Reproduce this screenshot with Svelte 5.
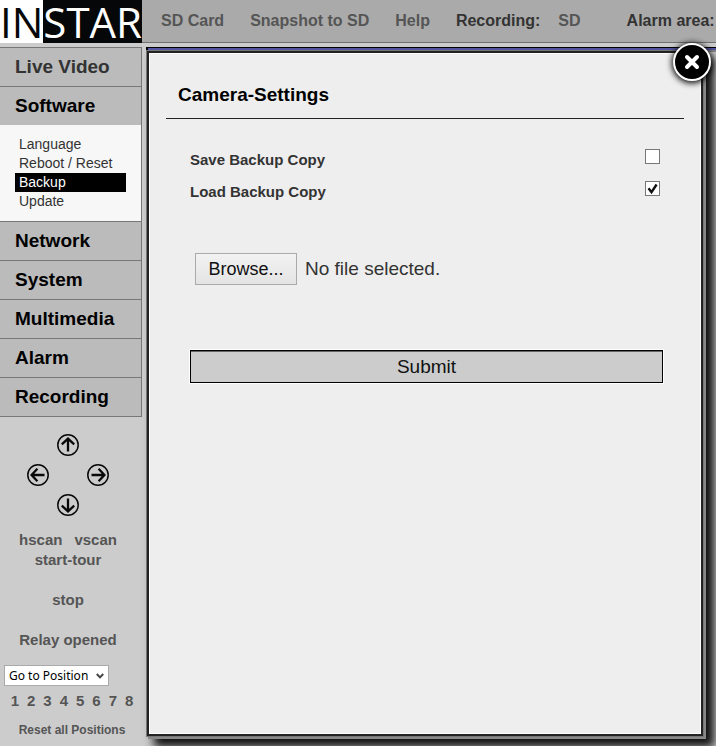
<script>
  const topLinks = ['SD Card', 'Snapshot to SD', 'Help'];
  const sections = [
    { title: 'Live Video', muted: true, items: [] },
    { title: 'Software', items: ['Language', 'Reboot / Reset', 'Backup', 'Update'] },
    { title: 'Network', items: [] },
    { title: 'System', items: [] },
    { title: 'Multimedia', items: [] },
    { title: 'Alarm', items: [] },
    { title: 'Recording', items: [] }
  ];
  const directions = [
    { name: 'up', angle: 0 },
    { name: 'left', angle: 270 },
    { name: 'right', angle: 90 },
    { name: 'down', angle: 180 }
  ];
  const positions = [1, 2, 3, 4, 5, 6, 7, 8];

  let current = $state('Backup');
  let save = $state(false);
  let load = $state(true);
  let open = $state(true);
  let fileName = $state('');
  let picker;
</script>

<div class="page">
  <header>
    <a class="logo" href="#home" aria-label="INSTAR"><span class="in">IN</span><span class="star">STAR</span></a>
    <nav class="top">
      {#each topLinks as link}
        <a href="#top">{link}</a>
      {/each}
      <span class="status"><b>Recording:</b><a href="#sd">SD</a></span>
      <b>Alarm area:</b>
    </nav>
  </header>

  <div class="body">
    <aside>
      <nav class="menu">
        {#each sections as section}
          <a class="title" class:muted={section.muted} href="#section">{section.title}</a>
          {#if section.items.length}
            <ul>
              {#each section.items as item}
                <li><a href="#item" class:current={item === current} onclick={() => (current = item)}>{item}</a></li>
              {/each}
            </ul>
          {/if}
        {/each}
      </nav>

      <div class="controls">
        <div class="pad">
          {#each directions as d}
            <button type="button" class={d.name} aria-label={d.name}>
              <svg width="24" height="24" viewBox="0 0 24 24" fill="none" stroke="#080808">
                <circle cx="12" cy="12" r="10.2" stroke-width="1.5" />
                <path d="M12 18.5V6.2M5.8 11.4L12 5.6l6.2 5.8" stroke-width="2.3" transform="rotate({d.angle} 12 12)" />
              </svg>
            </button>
          {/each}
        </div>
        <div class="scan"><a href="#hscan">hscan</a><a href="#vscan">vscan</a></div>
        <a href="#tour">start-tour</a>
        <a class="apart" href="#stop">stop</a>
        <a class="apart" href="#relay">Relay opened</a>
        <div class="goto">
          <select aria-label="Go to Position">
            <option>Go to Position</option>
            {#each positions as p}<option>{p}</option>{/each}
          </select>
          <svg width="8" height="6" viewBox="0 0 8 6" fill="none" stroke="#444" stroke-width="2"><path d="M.8 1L4 4.4 7.2 1" /></svg>
        </div>
        <div class="numbers">
          {#each positions as p}<a href="#position">{p}</a>{/each}
        </div>
        <a class="reset" href="#reset">Reset all Positions</a>
      </div>
    </aside>

    <main>
      <div class="video"></div>
      {#if open}
        <div class="dialog" role="dialog" aria-labelledby="dialog-title">
          <button type="button" class="close" aria-label="Close" onclick={() => (open = false)}>
            <svg width="16" height="16" viewBox="0 0 16 16" stroke="#fff" stroke-width="4" stroke-linecap="round"><path d="M3 3l10 10M13 3L3 13" /></svg>
          </button>
          <h1 id="dialog-title">Camera-Settings</h1>
          <form onsubmit={(e) => e.preventDefault()}>
            <div class="row">
              <label for="save">Save Backup Copy</label>
              <span class="box"><input id="save" type="checkbox" bind:checked={save} />
                {#if save}<svg viewBox="0 0 15 15"><path d="M3.5 7.2l3 4L11.6 3.5" /></svg>{/if}</span>
            </div>
            <div class="row">
              <label for="load">Load Backup Copy</label>
              <span class="box"><input id="load" type="checkbox" bind:checked={load} />
                {#if load}<svg viewBox="0 0 15 15"><path d="M3.5 7.2l3 4L11.6 3.5" /></svg>{/if}</span>
            </div>
            <div class="file">
              <input type="file" hidden bind:this={picker} aria-label="Backup file" onchange={() => (fileName = picker.files[0]?.name ?? '')} />
              <button type="button" onclick={() => picker.click()}>Browse...</button>
              <span>{fileName || 'No file selected.'}</span>
            </div>
            <button type="submit" class="submit">Submit</button>
          </form>
        </div>
      {/if}
    </main>
  </div>
</div>

<style>
  :global(body) {
    overflow: hidden;
  }
  .page {
    display: flex;
    flex-direction: column;
    min-height: 100vh;
    background: #ccc;
    color: #333;
    font-family: 'Liberation Sans', Arial, sans-serif;
  }
  .page * {
    box-sizing: border-box;
  }
  a {
    color: inherit;
    text-decoration: none;
  }
  button {
    font-family: inherit;
    padding: 0;
    cursor: pointer;
  }
  header {
    display: flex;
    height: 43px;
  }
  .logo {
    display: flex;
    flex: none;
    width: 142px;
    background: #050708;
    font: 42px/43px 'Open Sans', 'Noto Sans', sans-serif;
  }
  .in {
    flex: none;
    background: #fff;
    color: #050708;
  }
  .star {
    color: #fff;
  }
  .top {
    display: flex;
    flex: 1;
    align-items: center;
    gap: 26px;
    min-width: 0;
    padding-left: 19px;
    border-bottom: 1px solid #707070;
    background: #aaa;
    font-size: 16px;
    font-weight: bold;
    line-height: 20px;
    white-space: nowrap;
  }
  .top a {
    color: #555;
  }
  .status {
    display: flex;
    gap: 18px;
    margin-right: 20px;
  }
  .body {
    display: flex;
    flex: 1;
  }
  aside {
    display: flex;
    flex: none;
    flex-direction: column;
    width: 142px;
    padding-top: 4px;
  }
  .menu {
    border-right: 1px solid #777;
    border-bottom: 1px solid #777;
    background: #bbb;
  }
  .title {
    display: block;
    height: 39px;
    padding-left: 15px;
    border-top: 1px solid #777;
    color: #000;
    font-size: 19px;
    font-weight: bold;
    line-height: 37px;
  }
  .muted {
    color: #333;
  }
  ul {
    margin: 0;
    padding: 10px 15px;
    background: #f7f7f7;
    list-style: none;
    font-size: 14px;
    line-height: 19px;
  }
  li a {
    display: block;
    padding-left: 4px;
  }
  .current {
    background: #000;
    color: #fff;
  }
  .controls {
    display: flex;
    flex-direction: column;
    align-items: center;
    width: 136px;
    padding-top: 13px;
    color: #555;
    font-size: 15px;
    font-weight: bold;
    line-height: 20px;
  }
  .pad {
    display: grid;
    grid-template: 'a up b' 30px 'left c right' 30px 'd down e' 30px / 30px 30px 30px;
    place-items: center;
    margin-bottom: 10px;
  }
  .pad button {
    width: 24px;
    height: 24px;
    border: 0;
    background: none;
  }
  .pad svg {
    display: block;
  }
  .up {
    grid-area: up;
  }
  .left {
    grid-area: left;
  }
  .right {
    grid-area: right;
  }
  .down {
    grid-area: down;
  }
  .scan {
    display: flex;
    gap: 12px;
  }
  .apart {
    margin-top: 20px;
  }
  .goto {
    display: flex;
    align-items: center;
    align-self: flex-start;
    margin: 15px 0 5px 4px;
  }
  select {
    width: 105px;
    height: 21px;
    padding: 0 4px;
    border: 1px solid #aaa;
    border-radius: 0;
    appearance: none;
    background: #fff;
    color: #000;
    font: 12px/19px 'Noto Sans', sans-serif;
  }
  .goto svg {
    margin-left: -13px;
    pointer-events: none;
  }
  .numbers {
    display: flex;
    gap: 8px;
    margin-left: 8px;
  }
  .reset {
    margin: 9px 0 5px 8px;
    font-size: 12px;
  }
  main {
    position: relative;
    flex: 1;
    min-width: 0;
    padding: 4px 0 0 4px;
  }
  .video {
    height: 432px;
    border-top: 1px solid #000;
    border-left: 2px solid #000;
    background: linear-gradient(#5555a5 2px, #888 2px 4px, transparent 4px);
  }
  .dialog {
    position: absolute;
    inset: 8px 13px 10px 5px;
    padding: 27px 17px 20px;
    border: 2px solid #222;
    outline: 1px solid #777;
    background: #eee;
    box-shadow: inset 0 0 0 1px #fff, 2px 2px 0 1px #888, 9px 9px 9px 2px #111;
  }
  .close {
    position: absolute;
    top: -10px;
    right: -10px;
    display: grid;
    place-items: center;
    width: 38px;
    height: 38px;
    border: 2px solid #fff;
    border-radius: 50%;
    background: #000;
    box-shadow: 0 1px 6px 1px #000;
  }
  h1 {
    margin: 0;
    padding: 3px 12px 11px;
    border-bottom: 1px solid #222;
    color: #000;
    font-size: 19px;
    line-height: 24px;
  }
  form {
    padding: 24px 21px 0 24px;
  }
  .row {
    display: flex;
    align-items: center;
    justify-content: space-between;
    height: 32px;
    font-size: 15px;
    font-weight: bold;
  }
  .box {
    display: grid;
    padding: 0 3px 6px 0;
  }
  .box input,
  .box svg {
    grid-area: 1 / 1;
    width: 15px;
    height: 15px;
    margin: 0;
  }
  .box input {
    border: 1px solid #777;
    appearance: none;
    background: #fff;
  }
  .box svg {
    fill: none;
    stroke: #111;
    stroke-width: 2.4;
    pointer-events: none;
  }
  .file {
    display: flex;
    align-items: center;
    gap: 8px;
    margin: 46px 0 65px 5px;
    font-size: 19px;
  }
  .file button {
    width: 102px;
    height: 32px;
    border: 1px solid #aaa;
    background: linear-gradient(#f2f2f2, #e4e4e4);
    color: #111;
    font-size: 18px;
  }
  .submit {
    display: block;
    width: 100%;
    height: 33px;
    border: 1px solid #000;
    outline: 1px solid #fff;
    background: #ccc;
    box-shadow: inset 0 1px 0 #666;
    color: #111;
    font-size: 19px;
  }
</style>
